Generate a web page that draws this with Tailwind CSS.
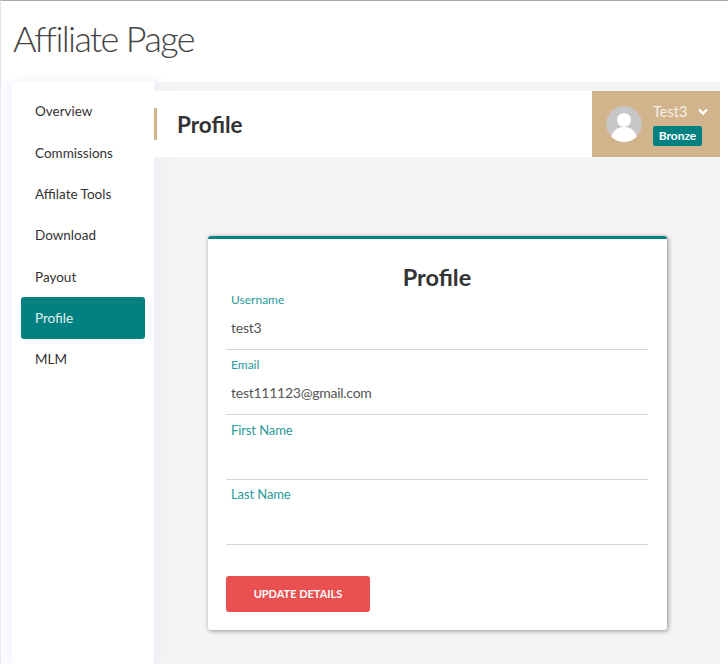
<!DOCTYPE html>
<html lang="en">
<head>
    <meta charset="UTF-8">
    <title>Affiliate Page</title>
    <script src="https://cdn.jsdelivr.net/npm/@tailwindcss/browser@4"></script>
</head>
<body class="bg-white font-['Lato','Noto_Sans',sans-serif] text-[#333] h-[664px] overflow-hidden">
    <div class="h-[664px] border-t border-t-[#aaa] border-l border-l-[#e4e4e4] flex flex-col">
        <h1 class="pl-3 pt-[14px] h-[81px] text-[36px] leading-[46px] font-light text-[#444] tracking-[-1.65px]">Affiliate Page</h1>
        <div class="ml-[11px] mr-2 flex-1 bg-[#f5f4f2] flex min-h-0">
            <!-- sidebar -->
            <aside class="w-[142px] bg-white shadow-[-8px_0_10px_#f3f7ff,8px_0_12px_#eef0f8] px-[9px] pt-[9px] z-10 text-[13.5px] text-[#333] font-normal">
                <a class="block h-[41.3px] px-[14px] leading-[41px]">Overview</a>
                <a class="block h-[41.3px] px-[14px] leading-[43px]">Commissions</a>
                <a class="block h-[41.3px] px-[14px] leading-[41px]">Affilate Tools</a>
                <a class="block h-[41.3px] px-[14px] leading-[41px]">Download</a>
                <a class="block h-[41.3px] px-[14px] leading-[43px]">Payout</a>
                <a class="block h-[42px] px-[14px] leading-[42px] bg-[#008080] text-[#e6f2f2] rounded-[3px]">Profile</a>
                <a class="block h-[41.3px] px-[14px] leading-[41px]">MLM</a>
            </aside>
            <main class="flex-1 min-w-0 flex flex-col pt-[9px] z-20">
                <header class="h-[66px] bg-white flex items-center justify-between">
                    <div class="h-8 border-l-[3px] border-l-[#d2b48c] pl-5 pt-[1px] flex items-center text-[22.5px] font-bold text-[#333]">Profile</div>
                    <div class="w-[128px] h-[66px] bg-[#d2b48c] flex items-center pl-[14px] gap-[11px]">
                        <svg class="w-9 h-9 rounded-full" viewBox="0 0 36 36">
                            <circle cx="18" cy="18" r="18" fill="#c6c6c6"/>
                            <circle cx="18" cy="14" r="7" fill="#fff"/>
                            <path d="M5 31c2-7 7-10 13-10s11 3 13 10c-3 3-8 5-13 5s-10-2-13-5z" fill="#fff"/>
                        </svg>
                        <div>
                            <div class="flex items-center text-[#f5efe5] text-[14.5px] leading-5">Test3
                                <svg class="w-[10px] h-[8px] ml-[11px]" viewBox="0 0 10 8"><path d="M1 1.5l4 4 4-4" fill="none" stroke="#fff" stroke-width="2.4"/></svg>
                            </div>
                            <span class="mt-[4px] block w-[49px] h-5 bg-[#008080] rounded-[2px] text-white text-[12px] leading-5 font-bold text-center">Bronze</span>
                        </div>
                    </div>
                </header>
                <div class="pl-[54px] pt-[79px]">
                    <form class="w-[459px] h-[394px] bg-white border-t-[3px] border-t-[#008080] rounded-[3px] shadow-[1px_1px_5px_rgba(0,0,0,0.42)] pl-[18px] pr-[19px] pt-[24px]">
                        <h2 class="text-center text-[23.5px] leading-[28px] font-bold text-[#333]">Profile</h2>
                        <div class="h-[59px] border-b border-b-[#d5d5d5] pl-[5px] pt-[1px]">
                            <label class="block text-[12px] leading-4 text-[#2a9a9a]">Username</label>
                            <div class="mt-[10px] text-[14px] leading-5 text-[#555] tracking-[-0.25px]">test3</div>
                        </div>
                        <div class="h-[65px] border-b border-b-[#d5d5d5] pl-[5px] pt-[7px]">
                            <label class="block text-[12px] leading-4 text-[#2a9a9a]">Email</label>
                            <div class="mt-[10px] text-[14px] leading-5 text-[#555] tracking-[-0.25px]">test111123@gmail.com</div>
                        </div>
                        <div class="h-[65px] border-b border-b-[#d5d5d5] pl-[5px] pt-[7px]">
                            <label class="block text-[13px] leading-4 text-[#2a9a9a] tracking-[-0.1px]">First Name</label>
                        </div>
                        <div class="h-[65px] border-b border-b-[#d5d5d5] pl-[5px] pt-[6px]">
                            <label class="block text-[13px] leading-4 text-[#2a9a9a] tracking-[-0.1px]">Last Name</label>
                        </div>
                        <button type="button" class="mt-[31px] w-[144px] h-9 bg-[#eb5050] rounded-[3px] text-white text-[11px] font-bold">UPDATE DETAILS</button>
                    </form>
                </div>
            </main>
        </div>
    </div>
</body>
</html>
